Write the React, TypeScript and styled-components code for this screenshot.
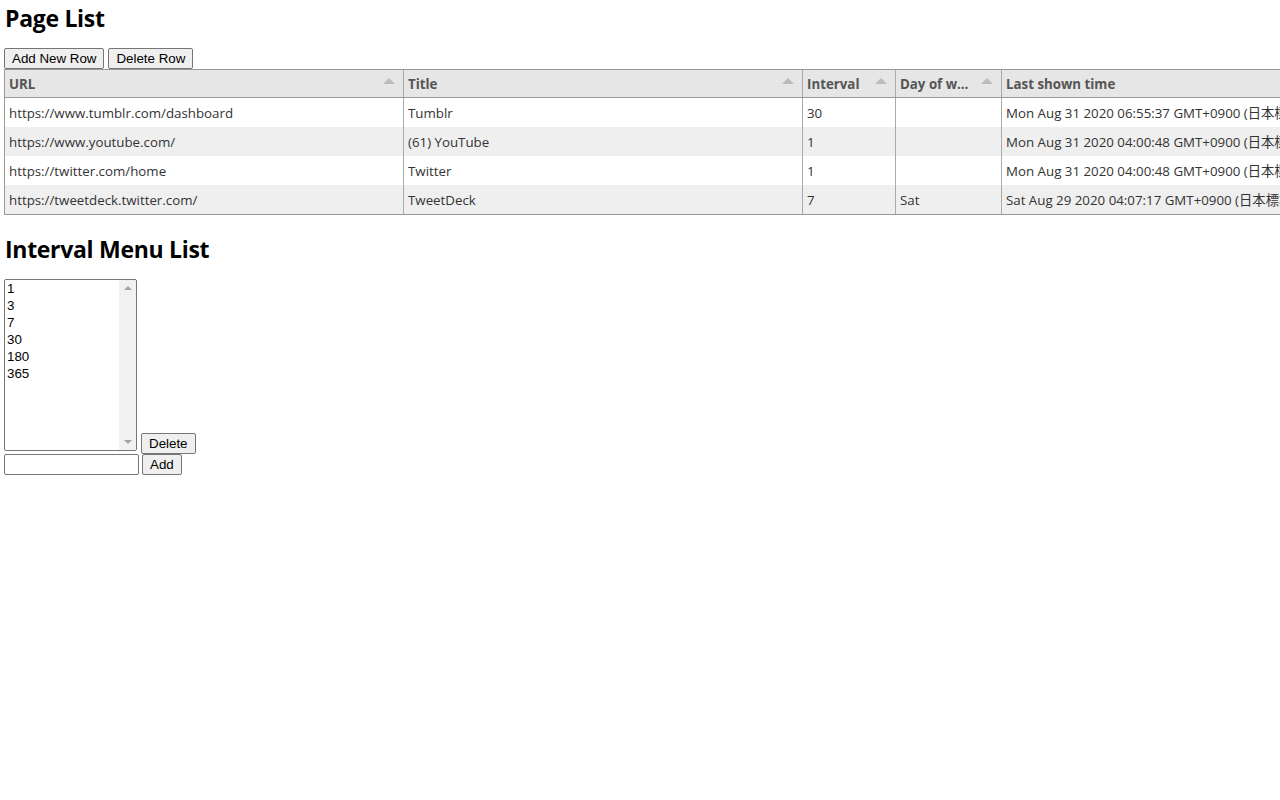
import styled, { createGlobalStyle } from 'styled-components';

const GlobalStyle = createGlobalStyle`
  html, body {
    margin: 0;
    padding: 0;
    background: #ffffff;
    overflow: hidden;
  }
  body {
    font-family: "Open Sans", "Noto Sans CJK JP", sans-serif;
    color: #000;
  }
`;

const Page = styled.div`
  padding-left: 4px;
`;

const Heading = styled.h2`
  margin: 0;
  padding-left: 1px;
  font-family: "Open Sans", sans-serif;
  font-size: 23px;
  font-weight: 700;
  line-height: 36px;
  letter-spacing: -0.3px;
  color: #000;
`;

const Toolbar = styled.div`
  display: flex;
  gap: 4px;
  margin-top: 12px;
`;

const Button = styled.button`
  height: 21px;
  padding: 0 7px;
  font-family: "Liberation Sans", Arial, sans-serif;
  font-size: 13.33px;
  color: #000;
  background: #efefef;
  border: 1px solid #767676;
  border-radius: 2px;
  cursor: pointer;
`;

const TableHolder = styled.div`
  overflow: hidden;
`;

const Table = styled.div`
  width: 1500px;
  border: 1px solid #999;
  background: #fff;
  font-family: "Open Sans", "Noto Sans CJK JP", sans-serif;
  font-size: 13.3px;
`;

const HeaderRow = styled.div`
  display: flex;
  height: 27px;
  background: #e6e6e6;
  border-bottom: 1px solid #999;
`;

const HeaderCell = styled.div<{ $w: number }>`
  position: relative;
  flex: 0 0 ${(p) => p.$w}px;
  box-sizing: border-box;
  padding: 1px 29px 0 4px;
  border-right: 1px solid #aaa;
  font-weight: 700;
  color: #555;
  line-height: 27px;
  white-space: nowrap;
  overflow: hidden;
  text-overflow: ellipsis;
`;

const SortArrow = styled.span`
  position: absolute;
  top: 8px;
  right: 8px;
  width: 0;
  height: 0;
  border-left: 6px solid transparent;
  border-right: 6px solid transparent;
  border-bottom: 6px solid #bbb;
`;

const Row = styled.div<{ $even: boolean }>`
  display: flex;
  height: 29px;
  background: ${(p) => (p.$even ? '#efefef' : '#ffffff')};
`;

const Cell = styled.div<{ $w: number }>`
  flex: 0 0 ${(p) => p.$w}px;
  box-sizing: border-box;
  padding: 1px 4px 0;
  border-right: 1px solid #aaa;
  color: #333;
  line-height: 28px;
  white-space: nowrap;
  overflow: hidden;
`;

const SecondHeading = styled(Heading)`
  margin-top: 16px;
`;

const ListRow = styled.div`
  display: flex;
  align-items: flex-end;
  gap: 4px;
  margin-top: 12px;
`;

const ListBox = styled.div`
  display: flex;
  width: 133px;
  height: 172px;
  box-sizing: border-box;
  margin-bottom: 3px;
  border: 1px solid #767676;
  border-radius: 2px;
  background: #fff;
  overflow: hidden;
`;

const Options = styled.div`
  flex: 1;
  font-family: "Liberation Sans", Arial, sans-serif;
  font-size: 13.33px;
  line-height: 17px;
  color: #000;
`;

const Option = styled.div`
  padding-left: 2px;
`;

const Scrollbar = styled.div`
  display: flex;
  flex-direction: column;
  justify-content: space-between;
  align-items: center;
  width: 17px;
  padding: 6px 0;
  box-sizing: border-box;
  background: #f1f1f1;
`;

const ScrollArrow = styled.span<{ $down?: boolean }>`
  width: 0;
  height: 0;
  border-left: 4px solid transparent;
  border-right: 4px solid transparent;
  ${(p) => (p.$down ? 'border-top: 4px solid #a3a3a3;' : 'border-bottom: 4px solid #a3a3a3;')}
`;

const AddRow = styled.div`
  display: flex;
  gap: 3px;
`;

const TextInput = styled.input`
  width: 135px;
  height: 21px;
  box-sizing: border-box;
  padding: 1px 2px;
  font-family: "Liberation Sans", Arial, sans-serif;
  font-size: 13.33px;
  border: 1px solid #767676;
  border-radius: 2px;
`;

const columns = [
  { title: 'URL', width: 399 },
  { title: 'Title', width: 399 },
  { title: 'Interval', width: 93 },
  { title: 'Day of week', width: 106 },
  { title: 'Last shown time', width: 500 },
];

const rows = [
  ['https://www.tumblr.com/dashboard', 'Tumblr', '30', '', 'Mon Aug 31 2020 06:55:37 GMT+0900 (日本標準時)'],
  ['https://www.youtube.com/', '(61) YouTube', '1', '', 'Mon Aug 31 2020 04:00:48 GMT+0900 (日本標準時)'],
  ['https://twitter.com/home', 'Twitter', '1', '', 'Mon Aug 31 2020 04:00:48 GMT+0900 (日本標準時)'],
  ['https://tweetdeck.twitter.com/', 'TweetDeck', '7', 'Sat', 'Sat Aug 29 2020 04:07:17 GMT+0900 (日本標準時)'],
];

const intervals = ['1', '3', '7', '30', '180', '365'];

export default function App() {
  return (
    <Page>
      <GlobalStyle />
      <Heading>Page List</Heading>
      <Toolbar>
        <Button>Add New Row</Button>
        <Button>Delete Row</Button>
      </Toolbar>
      <TableHolder>
        <Table>
          <HeaderRow>
            {columns.map((c, i) => (
              <HeaderCell key={c.title} $w={c.width}>
                {c.title}
                {i < 4 && <SortArrow />}
              </HeaderCell>
            ))}
          </HeaderRow>
          {rows.map((r, ri) => (
            <Row key={r[0]} $even={ri % 2 === 1}>
              {r.map((v, ci) => (
                <Cell key={ci} $w={columns[ci].width}>
                  {v}
                </Cell>
              ))}
            </Row>
          ))}
        </Table>
      </TableHolder>

      <SecondHeading>Interval Menu List</SecondHeading>
      <ListRow>
        <ListBox>
          <Options>
            {intervals.map((v) => (
              <Option key={v}>{v}</Option>
            ))}
          </Options>
          <Scrollbar>
            <ScrollArrow />
            <ScrollArrow $down />
          </Scrollbar>
        </ListBox>
        <Button>Delete</Button>
      </ListRow>
      <AddRow>
        <TextInput type="text" />
        <Button>Add</Button>
      </AddRow>
    </Page>
  );
}
